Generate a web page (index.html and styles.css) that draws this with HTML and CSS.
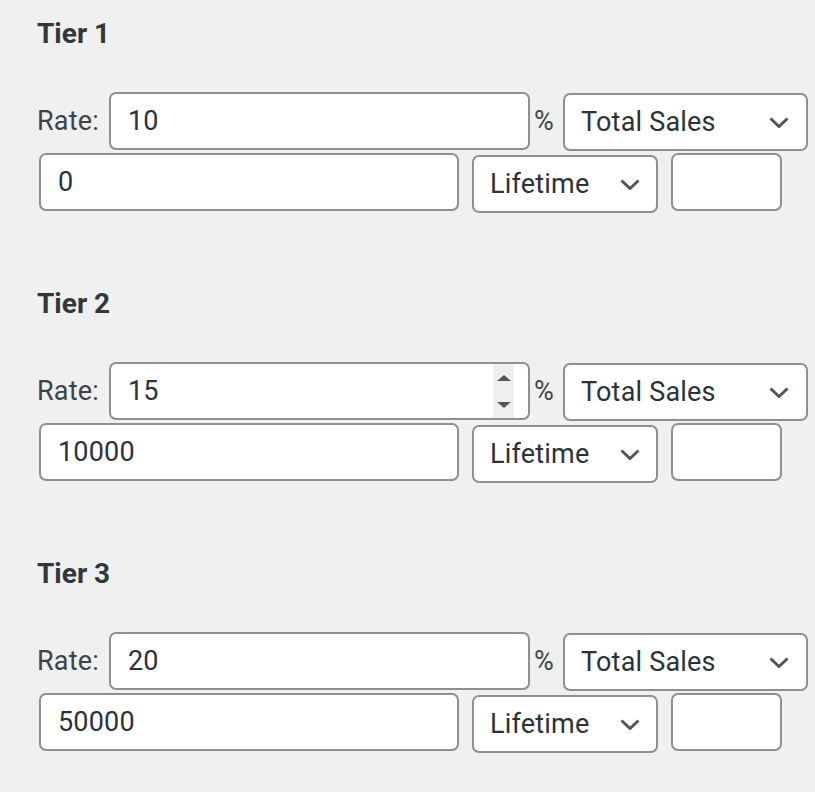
FILE: index.html
```html
<!DOCTYPE html>
<html lang="en">
<head>
<meta charset="utf-8">
<title>Tiers</title>
<link rel="stylesheet" href="styles.css">
</head>
<body>
<div class="tiers">
  <section class="tier">
    <h3 class="tier-title">Tier 1</h3>
    <div class="row row-rate">
      <label class="label">Rate:</label>
      <div class="field field-rate"><input class="input" type="text" value="10"></div>
      <span class="unit">%</span>
      <div class="select select-type"><span class="select-text">Total Sales</span><svg class="chev" width="20" height="11" viewBox="0 0 20 11"><polyline points="1.5,1.5 10,9.5 18.5,1.5" fill="none" stroke="#50575e" stroke-width="3"/></svg></div>
    </div>
    <div class="row row-amount">
      <div class="field field-amount"><input class="input" type="text" value="0"></div>
      <div class="select select-period"><span class="select-text">Lifetime</span><svg class="chev" width="20" height="11" viewBox="0 0 20 11"><polyline points="1.5,1.5 10,9.5 18.5,1.5" fill="none" stroke="#50575e" stroke-width="3"/></svg></div>
      <div class="field field-small"><input class="input" type="text" value=""></div>
    </div>
  </section>

  <section class="tier">
    <h3 class="tier-title">Tier 2</h3>
    <div class="row row-rate">
      <label class="label">Rate:</label>
      <div class="field field-rate"><input class="input" type="text" value="15"><div class="spinner"><span class="tri-up"></span><span class="tri-down"></span></div></div>
      <span class="unit">%</span>
      <div class="select select-type"><span class="select-text">Total Sales</span><svg class="chev" width="20" height="11" viewBox="0 0 20 11"><polyline points="1.5,1.5 10,9.5 18.5,1.5" fill="none" stroke="#50575e" stroke-width="3"/></svg></div>
    </div>
    <div class="row row-amount">
      <div class="field field-amount"><input class="input" type="text" value="10000"></div>
      <div class="select select-period"><span class="select-text">Lifetime</span><svg class="chev" width="20" height="11" viewBox="0 0 20 11"><polyline points="1.5,1.5 10,9.5 18.5,1.5" fill="none" stroke="#50575e" stroke-width="3"/></svg></div>
      <div class="field field-small"><input class="input" type="text" value=""></div>
    </div>
  </section>

  <section class="tier">
    <h3 class="tier-title">Tier 3</h3>
    <div class="row row-rate">
      <label class="label">Rate:</label>
      <div class="field field-rate"><input class="input" type="text" value="20"></div>
      <span class="unit">%</span>
      <div class="select select-type"><span class="select-text">Total Sales</span><svg class="chev" width="20" height="11" viewBox="0 0 20 11"><polyline points="1.5,1.5 10,9.5 18.5,1.5" fill="none" stroke="#50575e" stroke-width="3"/></svg></div>
    </div>
    <div class="row row-amount">
      <div class="field field-amount"><input class="input" type="text" value="50000"></div>
      <div class="select select-period"><span class="select-text">Lifetime</span><svg class="chev" width="20" height="11" viewBox="0 0 20 11"><polyline points="1.5,1.5 10,9.5 18.5,1.5" fill="none" stroke="#50575e" stroke-width="3"/></svg></div>
      <div class="field field-small"><input class="input" type="text" value=""></div>
    </div>
  </section>
</div>
</body>
</html>
```
FILE: styles.css
```css
html, body {
  margin: 0;
  padding: 0;
  background: #f0f0f1;
  font-family: Roboto, "Liberation Sans", Arial, sans-serif;
  color: #3c434a;
}

.tiers {
  padding: 16px 0 0 37px;
}

.tier {
  padding-bottom: 75px;
}

.tier-title {
  margin: 0 0 40px 0;
  font-size: 28px;
  line-height: 36px;
  font-weight: 700;
  color: #32373c;
}

.row {
  display: flex;
  align-items: flex-start;
}

.row-amount {
  margin-top: 3px;
  padding-left: 2px;
}

.label {
  flex: none;
  width: 72px;
  font-size: 27px;
  letter-spacing: 0.2px;
  line-height: 58px;
  height: 58px;
  color: #3c434a;
}

.unit {
  flex: none;
  width: 19px;
  font-size: 27px;
  line-height: 58px;
  height: 58px;
  color: #3c434a;
  margin-left: 4px;
  margin-right: 10px;
}

.field {
  flex: none;
  box-sizing: border-box;
  height: 58px;
  display: flex;
  align-items: stretch;
  background: #fff;
  border: 2px solid #8c8f94;
  border-radius: 7px;
}

.input {
  flex: 1;
  min-width: 0;
  border: 0;
  outline: none;
  background: transparent;
  padding: 0 16px 0 17px;
  margin: 0;
  font-family: inherit;
  font-size: 27px;
  letter-spacing: 0.2px;
  color: #2c3338;
}

.field-rate { width: 421px; }
.field-amount { width: 420px; margin-right: 13px; }
.field-small { width: 111px; }

.spinner {
  width: 21px;
  margin-right: 14px;
  background: #efefef;
  display: flex;
  flex-direction: column;
  align-items: center;
  justify-content: space-between;
  padding: 11px 0 10px;
}

.tri-up {
  width: 0;
  height: 0;
  border-left: 7px solid transparent;
  border-right: 7px solid transparent;
  border-bottom: 6px solid #555;
}

.tri-down {
  width: 0;
  height: 0;
  border-left: 7px solid transparent;
  border-right: 7px solid transparent;
  border-top: 6px solid #555;
}

.select {
  flex: none;
  box-sizing: border-box;
  height: 58px;
  display: flex;
  align-items: center;
  justify-content: space-between;
  background: #fff;
  border: 2px solid #8c8f94;
  border-radius: 7px;
  padding: 0 17px 0 16px;
  font-size: 27px;
  letter-spacing: 0.2px;
  color: #2c3338;
}

.select-type {
  width: 245px;
  margin: 1px 0 -1px 0;
}

.select-period {
  width: 186px;
  margin: 2px 13px -2px 0;
  padding-right: 16px;
}

.chev {
  display: block;
  flex: none;
}
```
